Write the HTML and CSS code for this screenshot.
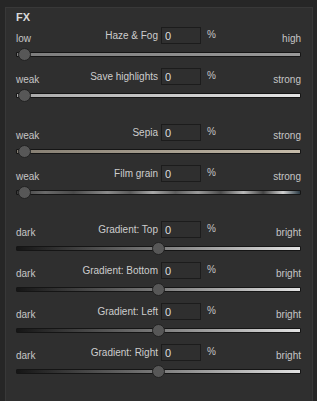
FILE: index.html
```html
<!DOCTYPE html>
<html lang="en">
<head>
    <meta charset="UTF-8">
    <meta name="viewport" content="width=device-width, initial-scale=1.0">
    <title>FX</title>
    <link rel="stylesheet" href="styles.css">
</head>
<body>
    <div class="panel">
        <div class="title">FX</div>

        <div class="group">
            <div class="row">
                <div class="head">
                    <span class="lo">low</span>
                    <span class="name">Haze &amp; Fog</span>
                    <input class="num" type="text" value="0">
                    <span class="pct">%</span>
                    <span class="hi">high</span>
                </div>
                <div class="track haze"><span class="thumb" style="left: 1px"></span></div>
            </div>
            <div class="row">
                <div class="head">
                    <span class="lo">weak</span>
                    <span class="name">Save highlights</span>
                    <input class="num" type="text" value="0">
                    <span class="pct">%</span>
                    <span class="hi">strong</span>
                </div>
                <div class="track highlights"><span class="thumb" style="left: 1px"></span></div>
            </div>
        </div>

        <div class="group">
            <div class="row">
                <div class="head">
                    <span class="lo">weak</span>
                    <span class="name">Sepia</span>
                    <input class="num" type="text" value="0">
                    <span class="pct">%</span>
                    <span class="hi">strong</span>
                </div>
                <div class="track sepia"><span class="thumb" style="left: 1px"></span></div>
            </div>
            <div class="row">
                <div class="head">
                    <span class="lo">weak</span>
                    <span class="name">Film grain</span>
                    <input class="num" type="text" value="0">
                    <span class="pct">%</span>
                    <span class="hi">strong</span>
                </div>
                <div class="track grain"><span class="thumb" style="left: 1px"></span></div>
            </div>
        </div>

        <div class="group">
            <div class="row">
                <div class="head">
                    <span class="lo">dark</span>
                    <span class="name">Gradient: Top</span>
                    <input class="num" type="text" value="0">
                    <span class="pct">%</span>
                    <span class="hi">bright</span>
                </div>
                <div class="track gradient"><span class="thumb" style="left: calc(50% - 6.5px)"></span></div>
            </div>
            <div class="row">
                <div class="head">
                    <span class="lo">dark</span>
                    <span class="name">Gradient: Bottom</span>
                    <input class="num" type="text" value="0">
                    <span class="pct">%</span>
                    <span class="hi">bright</span>
                </div>
                <div class="track gradient"><span class="thumb" style="left: calc(50% - 6.5px)"></span></div>
            </div>
            <div class="row">
                <div class="head">
                    <span class="lo">dark</span>
                    <span class="name">Gradient: Left</span>
                    <input class="num" type="text" value="0">
                    <span class="pct">%</span>
                    <span class="hi">bright</span>
                </div>
                <div class="track gradient"><span class="thumb" style="left: calc(50% - 6.5px)"></span></div>
            </div>
            <div class="row">
                <div class="head">
                    <span class="lo">dark</span>
                    <span class="name">Gradient: Right</span>
                    <input class="num" type="text" value="0">
                    <span class="pct">%</span>
                    <span class="hi">bright</span>
                </div>
                <div class="track gradient"><span class="thumb" style="left: calc(50% - 6.5px)"></span></div>
            </div>
        </div>
    </div>
</body>
</html>
```

FILE: styles.css
```css
body {
    margin: 0;
    padding: 0;
    height: 401px;
    overflow: hidden;
    background-color: #262626;
    font-family: "Liberation Sans", Arial, sans-serif;
    font-size: 10px;
    color: #c6c6c6;
}

.panel {
    margin: 7px 4px 0 5px;
    height: 400px;
    box-sizing: border-box;
    padding: 3px 11px 0 10px;
    background-color: #2f2f2f;
    border: 1px solid #383838;
}

.title {
    font-size: 11px;
    font-weight: bold;
    line-height: 13px;
    margin-bottom: 3px;
    color: #dadada;
}

.group + .group {
    padding-top: 15px;
}

.head {
    display: grid;
    grid-template-columns: 142px 40px auto 1fr;
    column-gap: 3px;
    height: 17px;
    line-height: 12px;
}

.lo {
    grid-column: 1;
    grid-row: 1;
    justify-self: start;
    align-self: end;
    margin-bottom: -1px;
}

.name {
    grid-column: 1;
    grid-row: 1;
    justify-self: end;
    align-self: center;
    color: #cdcdcd;
}

.num {
    grid-column: 2;
    grid-row: 1;
    width: 40px;
    height: 17px;
    box-sizing: border-box;
    margin: 0;
    padding: 0 0 0 3px;
    border: 1px solid #1c1c1c;
    background-color: #2f2f2f;
    color: #dcdcdc;
    font-family: "Liberation Sans", Arial, sans-serif;
    font-size: 11px;
    outline: none;
}

.pct {
    grid-column: 3;
    grid-row: 1;
    align-self: center;
    margin-left: 3px;
    margin-top: -2px;
}

.hi {
    grid-column: 4;
    grid-row: 1;
    justify-self: end;
    align-self: end;
    margin-bottom: -1px;
}

.track {
    position: relative;
    height: 5px;
    margin: 8px 0 11px;
    box-sizing: border-box;
    border: 1px solid #151515;
    border-radius: 1px;
}

.thumb {
    position: absolute;
    top: -5px;
    width: 13px;
    height: 13px;
    box-sizing: border-box;
    border-radius: 50%;
    background-color: #575757;
    border: 1px solid #222;
}

.haze {
    background: linear-gradient(to right, #7c7c7c, #999);
}

.highlights {
    background: linear-gradient(to right, #a8a8a8, #e4e4e4);
}

.sepia {
    background: linear-gradient(to right, #847d71, #c6bcaa);
}

.grain {
    background: linear-gradient(to right, #3a3a3a 0%, #6a6a6a 10%, #4a4a4a 20%, #8a8a8a 32%, #5a5a5a 40%, #a8a8a8 48%, #5e5e5e 56%, #9a9a9a 64%, #4c4c4c 72%, #b8b8b8 80%, #444 87%, #d0d0d0 94%, #2a3a44 100%);
}

.gradient {
    background: linear-gradient(to right, #151515, #e2e2e2);
}
```
